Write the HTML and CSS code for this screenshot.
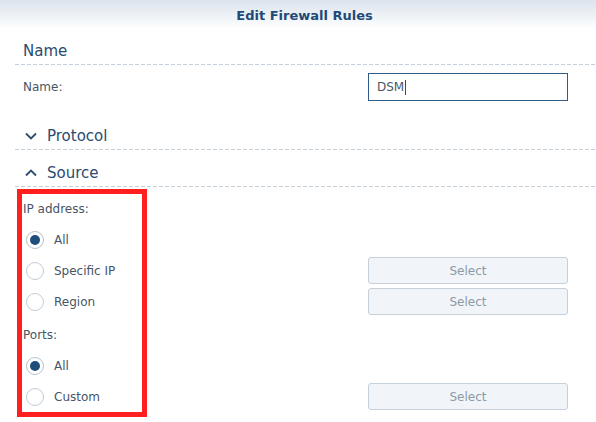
FILE: index.html
```html
<!DOCTYPE html>
<html>
<head>
<meta charset="utf-8">
<link rel="stylesheet" href="styles.css">
</head>
<body>
<div class="dialog">
  <header class="titlebar">Edit Firewall Rules</header>
  <main class="content">
    <section class="sec">
      <div class="sec-head sec-first">Name</div>
      <div class="row name-row">
        <span class="label">Name:</span>
        <div class="field">DSM<span class="caret"></span></div>
      </div>
    </section>
    <section class="sec">
      <div class="sec-head">
        <svg class="chev" width="12" height="8" viewBox="0 0 12 8"><path d="M1 1.5 L6 6.5 L11 1.5" fill="none" stroke="#2b4b6f" stroke-width="1.8"/></svg>
        Protocol
      </div>
    </section>
    <section class="sec">
      <div class="sec-head">
        <svg class="chev" width="12" height="8" viewBox="0 0 12 8"><path d="M1 6.5 L6 1.5 L11 6.5" fill="none" stroke="#2b4b6f" stroke-width="1.8"/></svg>
        Source
      </div>
      <div class="sec-body">
        <div class="group-label">IP address:</div>
        <div class="row opt"><span class="choice"><span class="radio on"></span>All</span></div>
        <div class="row opt"><span class="choice"><span class="radio"></span>Specific IP</span><button class="btn">Select</button></div>
        <div class="row opt"><span class="choice"><span class="radio"></span>Region</span><button class="btn">Select</button></div>
        <div class="group-label ports">Ports:</div>
        <div class="row opt"><span class="choice"><span class="radio on"></span>All</span></div>
        <div class="row opt"><span class="choice"><span class="radio"></span>Custom</span><button class="btn">Select</button></div>
      </div>
    </section>
    <div class="highlight"></div>
  </main>
</div>
</body>
</html>
```
FILE: styles.css
```css
* { box-sizing: border-box; }
html, body { margin: 0; padding: 0; background: #fff; }
body {
  font-family: "DejaVu Sans", Verdana, sans-serif;
  font-size: 12px;
  color: #475566;
}
.dialog {
  width: 596px;
  height: 422px;
  overflow: hidden;
  position: relative;
  background: #fff;
}
.titlebar {
  height: 29px;
  padding-top: 3px;
  padding-left: 13px;
  line-height: 26px;
  text-align: center;
  font-weight: bold;
  font-size: 13px;
  color: #1f4a78;
  background: linear-gradient(#dbe3ec 0%, #eef2f6 55%, #ffffff 100%);
}
.content {
  padding-left: 15px;
}
.sec-head {
  padding: 14px 0 5px 8px;
  line-height: 18px;
  font-size: 15px;
  color: #2b4b6f;
  display: flex;
  align-items: center;
  background-image: linear-gradient(to right, #c5cfd9 0 4px, transparent 4px 6px);
  background-size: 6px 1px;
  background-repeat: repeat-x;
  background-position: left bottom;
}
.sec-head.sec-first { padding-top: 13px; }
.chev { margin-left: 2px; margin-right: 10px; }
.row {
  display: flex;
  align-items: center;
  justify-content: space-between;
  padding-left: 8px;
  padding-right: 28px;
}
.name-row {
  padding-top: 8px;
  padding-bottom: 12px;
}
.field {
  width: 200px;
  height: 28px;
  border: 1px solid #2e5b88;
  padding-left: 8px;
  line-height: 26px;
  color: #4a5868;
  display: flex;
  align-items: center;
}
.caret {
  display: inline-block;
  width: 1px;
  height: 15px;
  background: #3a4a5a;
  margin-left: 1px;
}
.sec-body { padding-top: 11px; }
.group-label {
  padding-left: 8px;
  line-height: 22px;
  margin-bottom: 4px;
}
.group-label.ports { margin-top: 7px; }
.opt { height: 31px; }
.choice {
  display: flex;
  align-items: center;
}
.radio {
  width: 18px;
  height: 18px;
  border-radius: 50%;
  border: 1px solid #c3cdd8;
  margin-left: 3px;
  margin-right: 10px;
  display: inline-flex;
  align-items: center;
  justify-content: center;
  background: #fff;
}
.radio.on { border-color: #b4c3d2; }
.radio.on::after {
  content: "";
  width: 10px;
  height: 10px;
  border-radius: 50%;
  background: #1f4d7c;
}
.btn {
  width: 200px;
  height: 27px;
  border: 1px solid #c6d0da;
  border-radius: 3px;
  background: #f1f5f9;
  color: #8d99a6;
  font-family: "DejaVu Sans", Verdana, sans-serif;
  font-size: 12px;
  padding: 0;
}
.highlight {
  position: absolute;
  left: 17px;
  top: 189px;
  width: 130px;
  height: 228px;
  border: 5px solid #ff1f1f;
}
```
